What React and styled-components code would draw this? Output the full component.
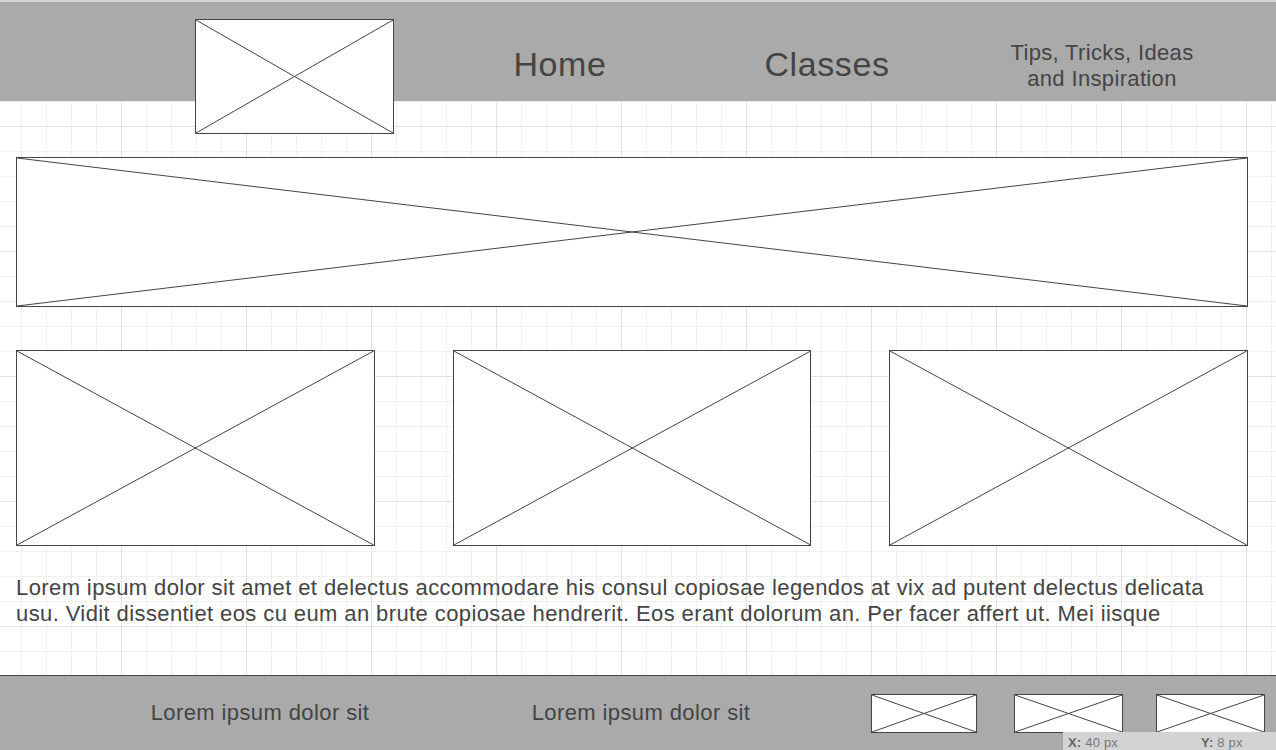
import React from "react";
import styled, { createGlobalStyle } from "styled-components";

const GlobalStyle = createGlobalStyle`
  html, body { margin: 0; padding: 0; }
  body { font-family: "Liberation Sans", Arial, sans-serif; background: #fff; }
`;

const Page = styled.div`
  position: relative;
  width: 1276px;
  height: 750px;
  overflow: hidden;
  display: flex;
  flex-direction: column;
  background-color: #fff;
  background-image:
    linear-gradient(to right, #e2e2e2 1px, transparent 1px),
    linear-gradient(to bottom, #e2e2e2 1px, transparent 1px),
    linear-gradient(to right, #f0f0f0 1px, transparent 1px),
    linear-gradient(to bottom, #f0f0f0 1px, transparent 1px);
  background-size: 125px 125px, 125px 125px, 25px 25px, 25px 25px;
  background-position: 121px 0, 0 1px, 21px 0, 0 1px;
  color: #444;
  letter-spacing: 0.4px;
`;

const TopStrip = styled.div`
  height: 2px;
  flex: none;
  background: #d4d4d4;
`;

const Header = styled.header`
  flex: none;
  height: 99px;
  display: flex;
  align-items: flex-start;
  padding-left: 195px;
  background: #aaaaaa;
`;

const Box = styled.div`
  flex: none;
  box-sizing: border-box;
  background: #fff;
  border: 1px solid #444;
  width: ${(p) => p.$w || "auto"};
  height: ${(p) => p.$h};
  margin-left: ${(p) => p.$ml || 0}px;
  svg { display: block; width: 100%; height: 100%; }
`;

const LogoBox = styled(Box)`
  margin-top: 17px;
  position: relative;
  z-index: 1;
`;

const Nav = styled.nav`
  flex: 1;
  align-self: stretch;
  box-sizing: border-box;
  padding-top: 24px;
  display: grid;
  grid-template-columns: 332px 202px 1fr;
  align-items: center;
`;

const NavItem = styled.div`
  text-align: center;
  font-size: ${(p) => (p.$small ? "22px" : "34px")};
  line-height: ${(p) => (p.$small ? "26px" : "40px")};
  padding-top: ${(p) => (p.$small ? "4px" : "0")};
  letter-spacing: ${(p) => (p.$small ? "0.35px" : "0.6px")};
  color: #444;
`;

const Main = styled.main`
  flex: none;
  padding: 0 28px 0 16px;
  display: flex;
  flex-direction: column;
`;

const Hero = styled(Box)`
  margin-top: 56px;
`;

const CardRow = styled.div`
  margin-top: 43px;
  display: grid;
  grid-template-columns: repeat(3, 1fr);
  gap: 78px;
`;

const Paragraph = styled.p`
  margin: 29px 0 0;
  font-size: 22px;
  line-height: 26px;
  color: #444;
`;

const Footer = styled.footer`
  margin-top: auto;
  flex: none;
  height: 75px;
  box-sizing: border-box;
  border-top: 1px solid #444;
  background: #aaaaaa;
  display: flex;
  align-items: center;
`;

const FooterText = styled.div`
  flex: none;
  width: ${(p) => p.$w}px;
  text-align: center;
  font-size: 22px;
  line-height: 26px;
  color: #444;
`;

const Thumbs = styled.div`
  margin-left: 109px;
  display: flex;
  align-items: center;
`;

const StatusBar = styled.div`
  position: absolute;
  right: 0;
  bottom: 0;
  width: 213px;
  height: 18px;
  box-sizing: border-box;
  padding: 2px 0 0 5px;
  background: #d3d3d3;
  display: grid;
  grid-template-columns: 133px 1fr;
  font-size: 13px;
  line-height: 18px;
  letter-spacing: 0.2px;
  color: #777;
  overflow: hidden;
  white-space: nowrap;
`;

const Label = styled.b`
  color: #666;
`;

const Cross = () => (
  <svg viewBox="0 0 100 100" preserveAspectRatio="none">
    <line x1="0" y1="0" x2="100" y2="100" stroke="#444" strokeWidth="1" vectorEffect="non-scaling-stroke" />
    <line x1="100" y1="0" x2="0" y2="100" stroke="#444" strokeWidth="1" vectorEffect="non-scaling-stroke" />
  </svg>
);

const thumbs = [
  { w: 106, ml: 0 },
  { w: 109, ml: 37 },
  { w: 109, ml: 33 },
];

export default function App() {
  return (
    <>
      <GlobalStyle />
      <Page>
        <TopStrip />
        <Header>
          <LogoBox $w="199px" $h="115px">
            <Cross />
          </LogoBox>
          <Nav>
            <NavItem>Home</NavItem>
            <NavItem>Classes</NavItem>
            <NavItem $small>
              Tips, Tricks, Ideas
              <br />
              and Inspiration
            </NavItem>
          </Nav>
        </Header>
        <Main>
          <Hero $h="150px">
            <Cross />
          </Hero>
          <CardRow>
            {[0, 1, 2].map((i) => (
              <Box key={i} $h="196px">
                <Cross />
              </Box>
            ))}
          </CardRow>
          <Paragraph>
            Lorem ipsum dolor sit amet et delectus accommodare his consul copiosae legendos at vix ad putent delectus delicata usu. Vidit dissentiet eos cu eum an brute copiosae hendrerit. Eos erant dolorum an. Per facer affert ut. Mei iisque
          </Paragraph>
        </Main>
        <Footer>
          <FooterText $w={520}>Lorem ipsum dolor sit</FooterText>
          <FooterText $w={242}>Lorem ipsum dolor sit</FooterText>
          <Thumbs>
            {thumbs.map((t, i) => (
              <Box key={i} $w={`${t.w}px`} $ml={t.ml} $h="39px">
                <Cross />
              </Box>
            ))}
          </Thumbs>
        </Footer>
        <StatusBar>
          <span>
            <Label>X:</Label> 40 px
          </span>
          <span>
            <Label>Y:</Label> 8 px
          </span>
        </StatusBar>
      </Page>
    </>
  );
}
